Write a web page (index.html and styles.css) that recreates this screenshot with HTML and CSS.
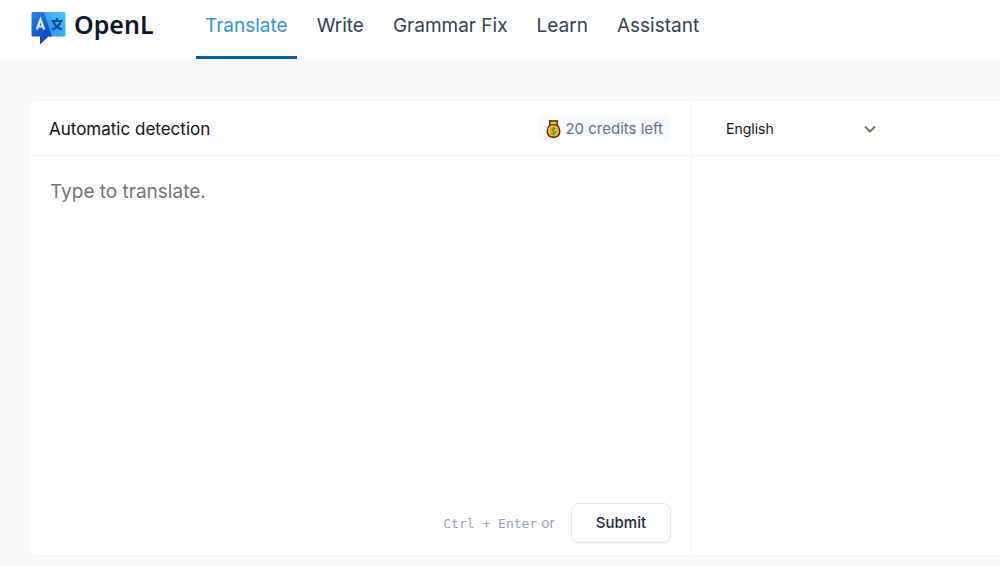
FILE: index.html
```html
<!DOCTYPE html>
<html lang="en">
<head>
<meta charset="utf-8">
<meta name="viewport" content="width=device-width, initial-scale=1">
<title>OpenL Translate</title>
<link rel="stylesheet" href="styles.css">
</head>
<body>
<header class="topbar">
  <a class="brand" href="#">
    <svg class="brand-icon" viewBox="0 0 36 35" aria-hidden="true">
      <defs>
        <linearGradient id="deep" x1="0" y1="0" x2="0.5" y2="1">
          <stop offset="0" stop-color="#2584ec"/>
          <stop offset="1" stop-color="#0d42b8"/>
        </linearGradient>
        <linearGradient id="light" x1="0" y1="1" x2="1" y2="0">
          <stop offset="0" stop-color="#1f8de8"/>
          <stop offset="1" stop-color="#50c8f7"/>
        </linearGradient>
      </defs>
      <path fill="url(#light)" d="M12 1H34q1.500 0 1.500 1.500V24q0 1.500-1.500 1.500H19z"/>
      <path fill="url(#deep)" d="M3 1H14L22 25.500H18.500L10 33.500V25.500H3Q1.500 25.500 1.500 24V2.500Q1.500 1 3 1z"/>
      <path fill="none" stroke="#d3e4fa" stroke-width="2.200" d="M6.800 18.500L10.500 8.500L14.200 18.500M8 15.500H13"/>
      <path fill="none" stroke="#0d4a9e" stroke-width="2.200" d="M21.500 10H32.500M27 7V10M30.500 10.500Q29 16 22 18.500M23.500 10.500Q25 16 32 18.500"/>
    </svg>
    <span class="brand-name">OpenL</span>
  </a>
  <nav class="tabs">
    <a class="tab tab-active" href="#" aria-current="page">Translate</a>
    <a class="tab" href="#">Write</a>
    <a class="tab" href="#">Grammar Fix</a>
    <a class="tab" href="#">Learn</a>
    <a class="tab" href="#">Assistant</a>
  </nav>
</header>
<main class="page">
  <div class="translator">
    <form class="pane">
      <div class="pane-head">
        <label class="source-label" for="source">Automatic detection</label>
        <span class="credits">
          <svg class="money-bag" viewBox="0 0 14 18" aria-hidden="true">
            <path fill="#f5b01f" stroke="#3b2b19" stroke-width="1.400" d="M3 1H11L10.500 5Q13.300 7.500 13.300 11Q13.300 17.200 7 17.200T.7 11Q.7 7.500 3.500 5z"/>
            <path fill="none" stroke="#3b2b19" stroke-width="1" d="M3.500 4.800H10.500"/>
            <path fill="none" stroke="#ffcb35" stroke-width="1.400" d="M4 2.600H10M3.500 7Q2 9 2.200 12"/>
            <path fill="none" stroke="#3fa31f" stroke-width="1.100" d="M9 8.700Q7.500 7.600 5.700 8.500Q4.500 10 7 10.900Q9.800 11.800 8.600 13.400Q7 14.500 5 13.200M7 7V15"/>
          </svg>
          20 credits left
        </span>
      </div>
      <textarea class="source" id="source" placeholder="Type to translate."></textarea>
      <div class="actions">
        <span class="hint"><kbd>Ctrl + Enter</kbd> or</span>
        <button class="submit" type="submit">Submit</button>
      </div>
    </form>
    <section class="pane pane-target" aria-label="Translation">
      <div class="pane-head target-head">
        <div class="select-wrap">
          <select class="language" aria-label="Target language">
            <option>English</option>
          </select>
          <svg class="chevron" viewBox="0 0 12 8" aria-hidden="true">
            <path d="M1 1.500L6 6.500L11 1.500"/>
          </svg>
        </div>
      </div>
    </section>
  </div>
</main>
</body>
</html>
```
FILE: styles.css
```css
* { box-sizing: border-box; }

body {
  margin: 0;
  background: #f8fafc;
  color: #1e293b;
  font-family: Inter, "Liberation Sans", sans-serif;
}

a { text-decoration: none; }

.topbar {
  display: flex;
  height: 59px;
  padding-left: 30px;
  background: #fff;
}

.brand {
  display: flex;
  align-items: center;
  gap: 8px;
  width: 166px;
  padding-bottom: 3px;
  color: #0f172a;
}

.brand-icon { width: 36px; height: 35px; }

.brand-name {
  padding-bottom: 8px;
  font: 600 25px/36px "Noto Sans", sans-serif;
}

.tabs { display: flex; gap: 11px; }

.tab {
  padding: 12px 9px 0;
  border-bottom: 3px solid transparent;
  color: #334155;
  font-size: 19px;
  line-height: 28px;
  white-space: nowrap;
}

.tab-active {
  border-color: #075e9f;
  color: #3492da;
}

.page { padding: 41px 0 11px 28px; }

.translator {
  display: grid;
  grid-template-columns: minmax(0, 15fr) minmax(0, 7fr);
  min-height: 456px;
  border: 1px solid #eff4f9;
  border-right: 0;
  border-radius: 8px 0 0 8px;
  background: #fff;
}

.pane {
  display: flex;
  flex-direction: column;
}

.pane-target { border-left: 1px solid #eff4f9; }

.pane-head {
  display: flex;
  align-items: center;
  justify-content: space-between;
  height: 55px;
  padding: 1px 20px 0;
  border-bottom: 1px solid #eff4f9;
}

.source-label {
  color: #111;
  font-size: 17px;
  line-height: 24px;
}

.credits {
  display: flex;
  align-items: center;
  gap: 4px;
  padding: 4px 8px;
  border-radius: 8px;
  background: #f8fafc;
  color: #64748b;
  font-size: 15px;
  line-height: 20px;
}

.money-bag { width: 15px; height: 18px; }

.source {
  flex: 1;
  width: 100%;
  padding: 22px 21px;
  border: 0;
  outline: 0;
  resize: none;
  background: transparent;
  color: #111;
  font: 19px/28px Inter, sans-serif;
}

.source::placeholder { color: #757575; opacity: 1; }

.actions {
  display: flex;
  align-items: center;
  justify-content: flex-end;
  gap: 16px;
  padding: 0 20px 12px;
}

.hint {
  color: #94a3b8;
  font-size: 14px;
  line-height: 20px;
}

.hint kbd { font: 13px/20px "DejaVu Sans Mono", monospace; }

.submit {
  padding: 9px 24px;
  border: 1px solid #e2e8f0;
  border-radius: 8px;
  background: #fff;
  box-shadow: 0 1px 2px #0f172a0c;
  color: #1e293b;
  font: 500 15px/20px Inter, sans-serif;
}

.target-head { padding-left: 34px; }

.select-wrap {
  display: grid;
  align-items: center;
  width: 150px;
}

.language,
.chevron { grid-area: 1 / 1; }

.language {
  width: 100%;
  padding: 0;
  border: 0;
  appearance: none;
  background: transparent;
  color: #111;
  font: 14px/20px Inter, sans-serif;
}

.chevron {
  justify-self: end;
  width: 12px;
  height: 8px;
  fill: none;
  stroke: #64748b;
  stroke-width: 2;
  pointer-events: none;
}
```
